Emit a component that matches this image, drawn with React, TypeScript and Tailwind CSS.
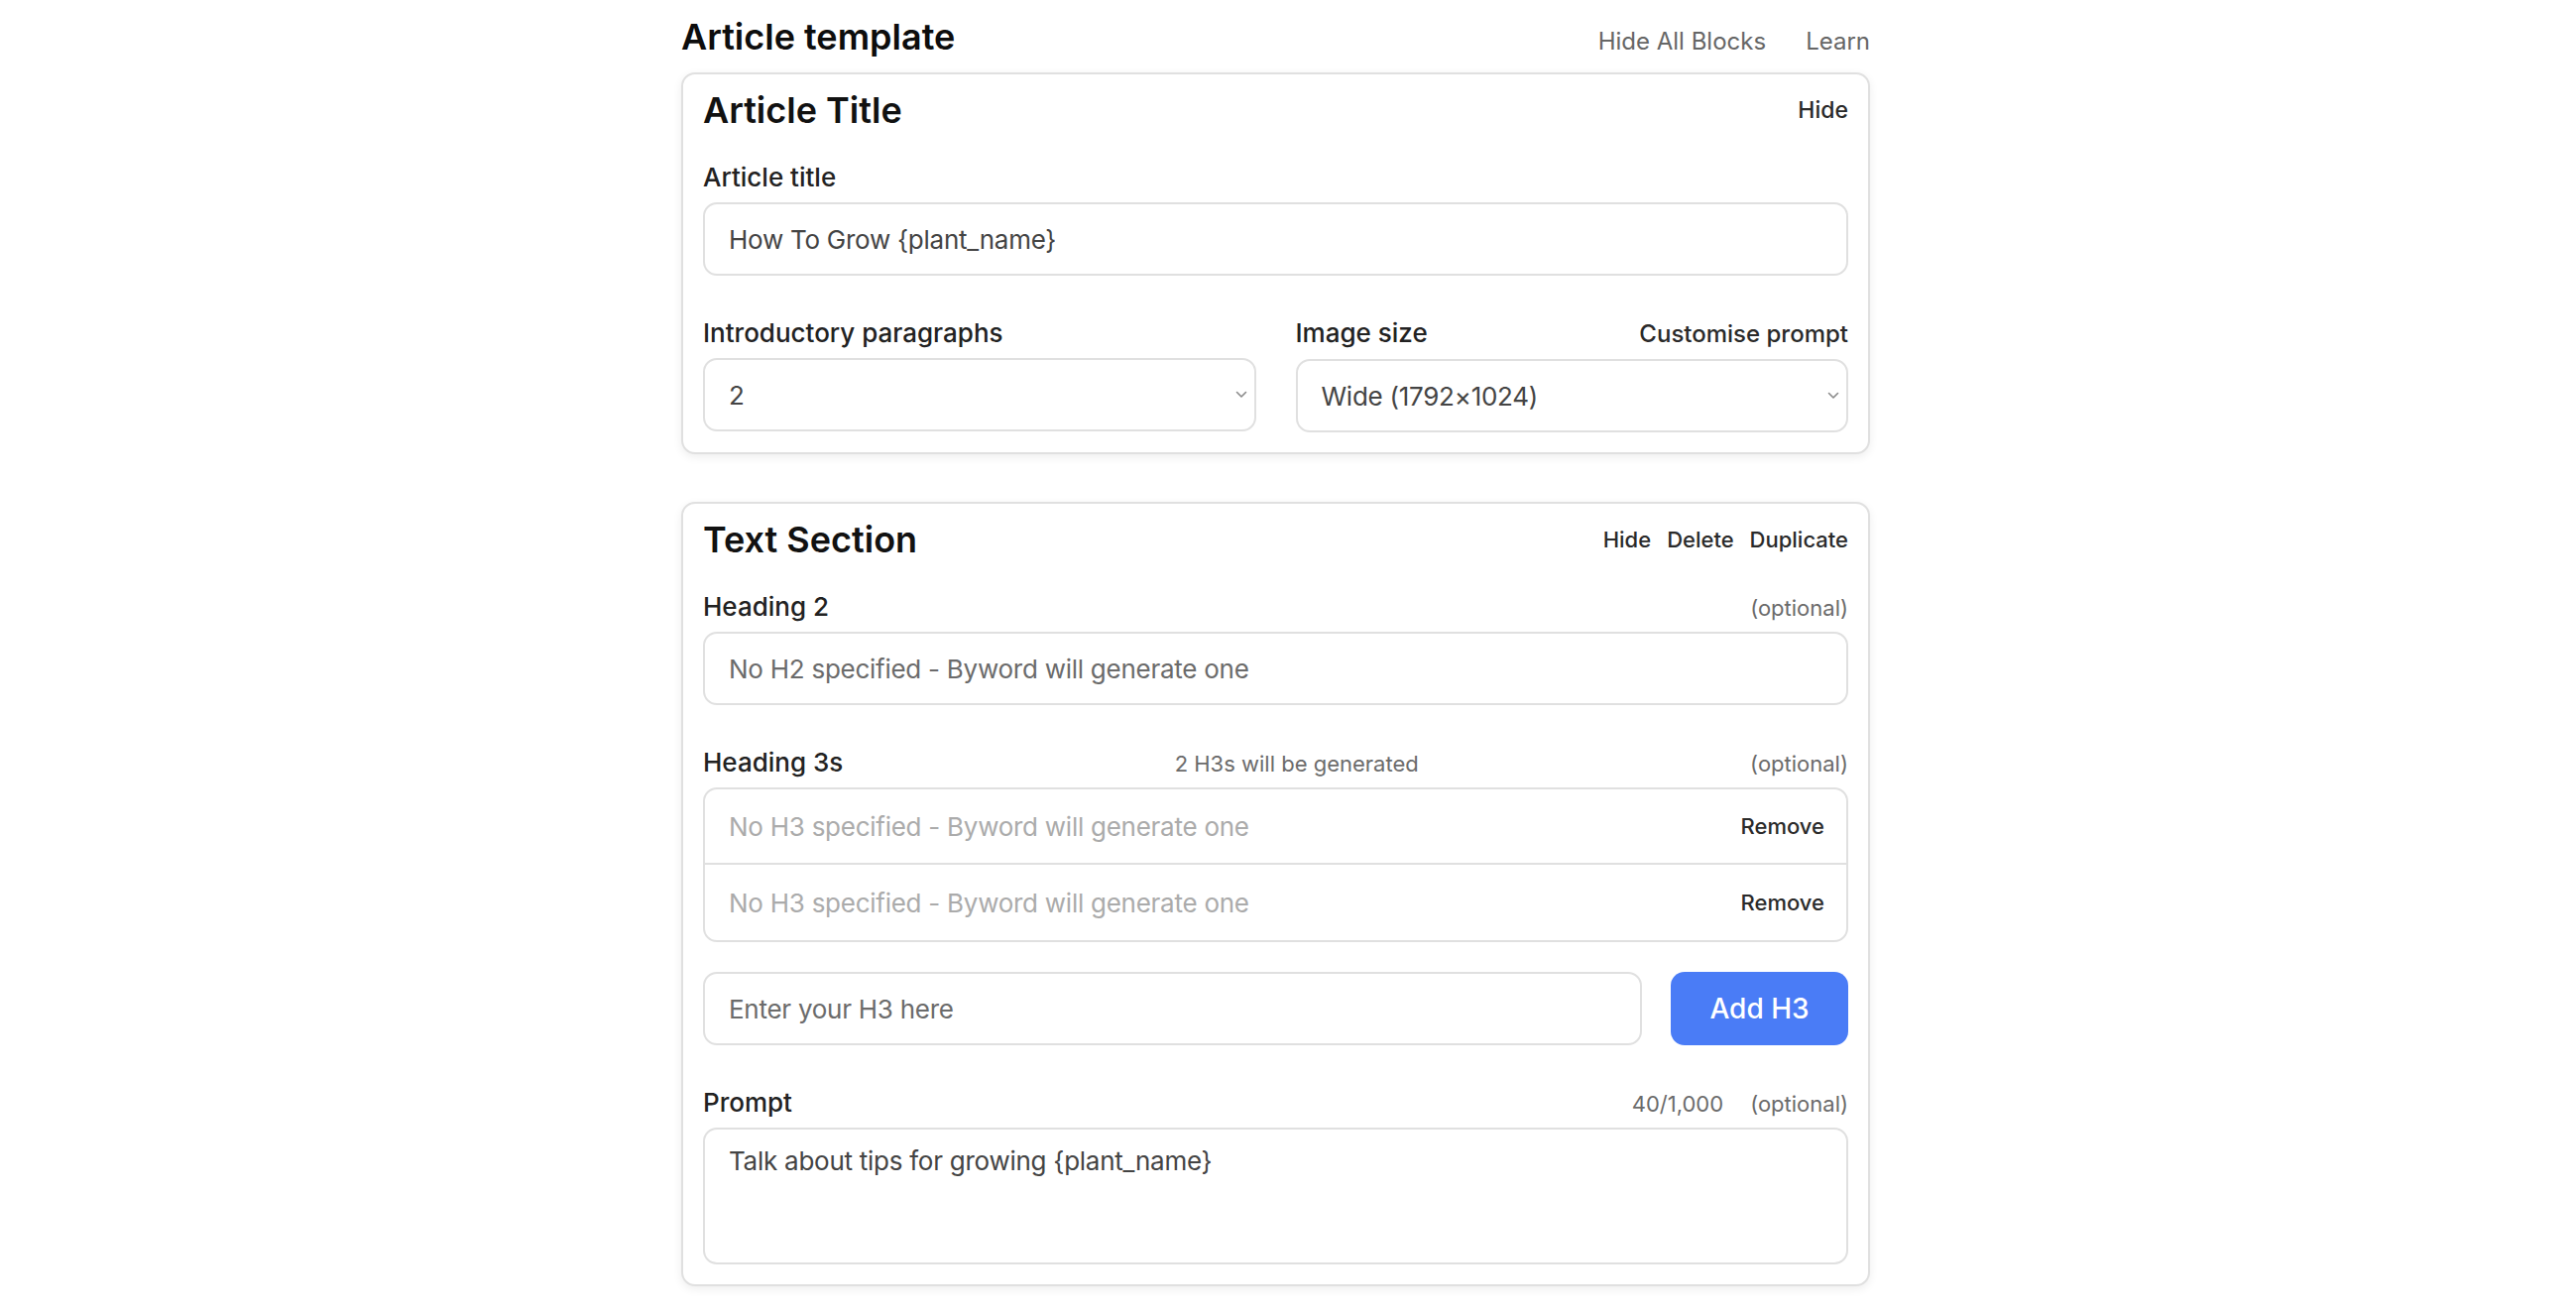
import { ReactNode } from 'react';

const labelText = "text-[26px] leading-[36px] font-medium text-[#222]";
const hintText = "text-[22px] text-[#6b6b6b]";
const fieldBox = "h-[74px] w-full rounded-[14px] border-2 border-[#e0e0e0] bg-white px-[24px] text-[26px] tracking-[-0.01em] text-[#444] outline-none";

type CardProps = {
  title: string
  actions: string[]
  actionSize: string
  children: ReactNode
}

function Card({ title, actions, actionSize, children }: CardProps) {
  return (
    <section className="rounded-[14px] border-2 border-[#e0e0e0] bg-white px-[20px] pt-[14px] pb-[20px] shadow-[0_3px_10px_rgba(0,0,0,0.07)]">
      <div className="flex items-center justify-between">
        <h2 className="text-[36px] leading-[44px] font-semibold text-[#111]">{title}</h2>
        <div className={`flex gap-[16px] font-medium text-[#2a2a2a] ${actionSize}`}>
          {actions.map((a) => (
            <button key={a}>{a}</button>
          ))}
        </div>
      </div>
      <div className="mt-[28px] flex flex-col gap-[40px]">{children}</div>
    </section>
  );
}

function FieldLabel({ children, right }: { children: ReactNode, right?: ReactNode }) {
  return (
    <div className="mb-[7px] flex items-baseline justify-between">
      <span className={labelText}>{children}</span>
      {right}
    </div>
  );
}

function FakeSelect({ value }: { value: string }) {
  return (
    <div className={`${fieldBox} flex items-center justify-between pr-[7px]`}>
      <span>{value}</span>
      <svg width="12" height="8" viewBox="0 0 12 8" fill="none">
        <path d="M1.5 1.5 6 6l4.5-4.5" stroke="#8a8a8a" strokeWidth="1.6" strokeLinecap="round" strokeLinejoin="round" />
      </svg>
    </div>
  );
}

export default function App() {
  return (
    <div className="min-h-screen bg-white font-['Inter',sans-serif]">
      <div className="ml-[687px] w-[1199px]">
        <header className="flex h-[73px] items-baseline justify-between pt-[15px]">
          <h1 className="text-[36px] leading-[44px] font-semibold text-[#0d0d0d]">Article template</h1>
          <nav className="flex gap-[40px] text-[24px] text-[#666]">
            <button>Hide All Blocks</button>
            <button>Learn</button>
          </nav>
        </header>

        <Card title="Article Title" actions={["Hide"]} actionSize="text-[23px]">
          <div>
            <FieldLabel>Article title</FieldLabel>
            <input className={fieldBox} defaultValue="How To Grow {plant_name}" />
          </div>
          <div className="grid grid-cols-2 gap-[40px]">
            <div>
              <FieldLabel>Introductory paragraphs</FieldLabel>
              <FakeSelect value="2" />
            </div>
            <div>
              <FieldLabel right={<span className="text-[24px] font-medium text-[#2a2a2a]">Customise prompt</span>}>
                Image size
              </FieldLabel>
              <FakeSelect value="Wide (1792×1024)" />
            </div>
          </div>
        </Card>

        <div className="mt-[48px]">
          <Card title="Text Section" actions={["Hide", "Delete", "Duplicate"]} actionSize="text-[22px]">
            <div>
              <FieldLabel right={<span className={hintText}>(optional)</span>}>Heading 2</FieldLabel>
              <input
                className={`${fieldBox} placeholder:text-[#6b6b6b]`}
                placeholder="No H2 specified - Byword will generate one"
              />
            </div>

            <div>
              <div className="mb-[7px] flex items-baseline justify-between">
                <span className={labelText}>Heading 3s</span>
                <span className={hintText}>2 H3s will be generated</span>
                <span className={hintText}>(optional)</span>
              </div>
              <div className="divide-y-2 divide-[#e0e0e0] rounded-[14px] border-2 border-[#e0e0e0]">
                {[0, 1].map((i) => (
                  <div key={i} className="flex h-[76px] items-center justify-between pl-[24px] pr-[22px]">
                    <span className="text-[26px] tracking-[-0.01em] text-[#ababab]">No H3 specified - Byword will generate one</span>
                    <button className="text-[22px] font-medium text-[#2a2a2a]">Remove</button>
                  </div>
                ))}
              </div>
              <div className="mt-[30px] flex gap-[29px]">
                <input
                  className={`${fieldBox} flex-1 placeholder:text-[#6b6b6b]`}
                  placeholder="Enter your H3 here"
                />
                <button className="h-[74px] w-[179px] shrink-0 rounded-[14px] bg-[#4a7cf6] text-[28px] font-medium text-white">
                  Add H3
                </button>
              </div>
            </div>

            <div>
              <FieldLabel
                right={
                  <div className="flex gap-[27px]">
                    <span className={hintText}>40/1,000</span>
                    <span className={hintText}>(optional)</span>
                  </div>
                }
              >
                Prompt
              </FieldLabel>
              <textarea
                className="block h-[138px] w-full resize-none rounded-[14px] border-2 border-[#e0e0e0] px-[24px] pt-[14px] text-[26px] leading-[36px] tracking-[-0.01em] text-[#444] outline-none"
                defaultValue="Talk about tips for growing {plant_name}"
              />
            </div>
          </Card>
        </div>
      </div>
    </div>
  );
}
